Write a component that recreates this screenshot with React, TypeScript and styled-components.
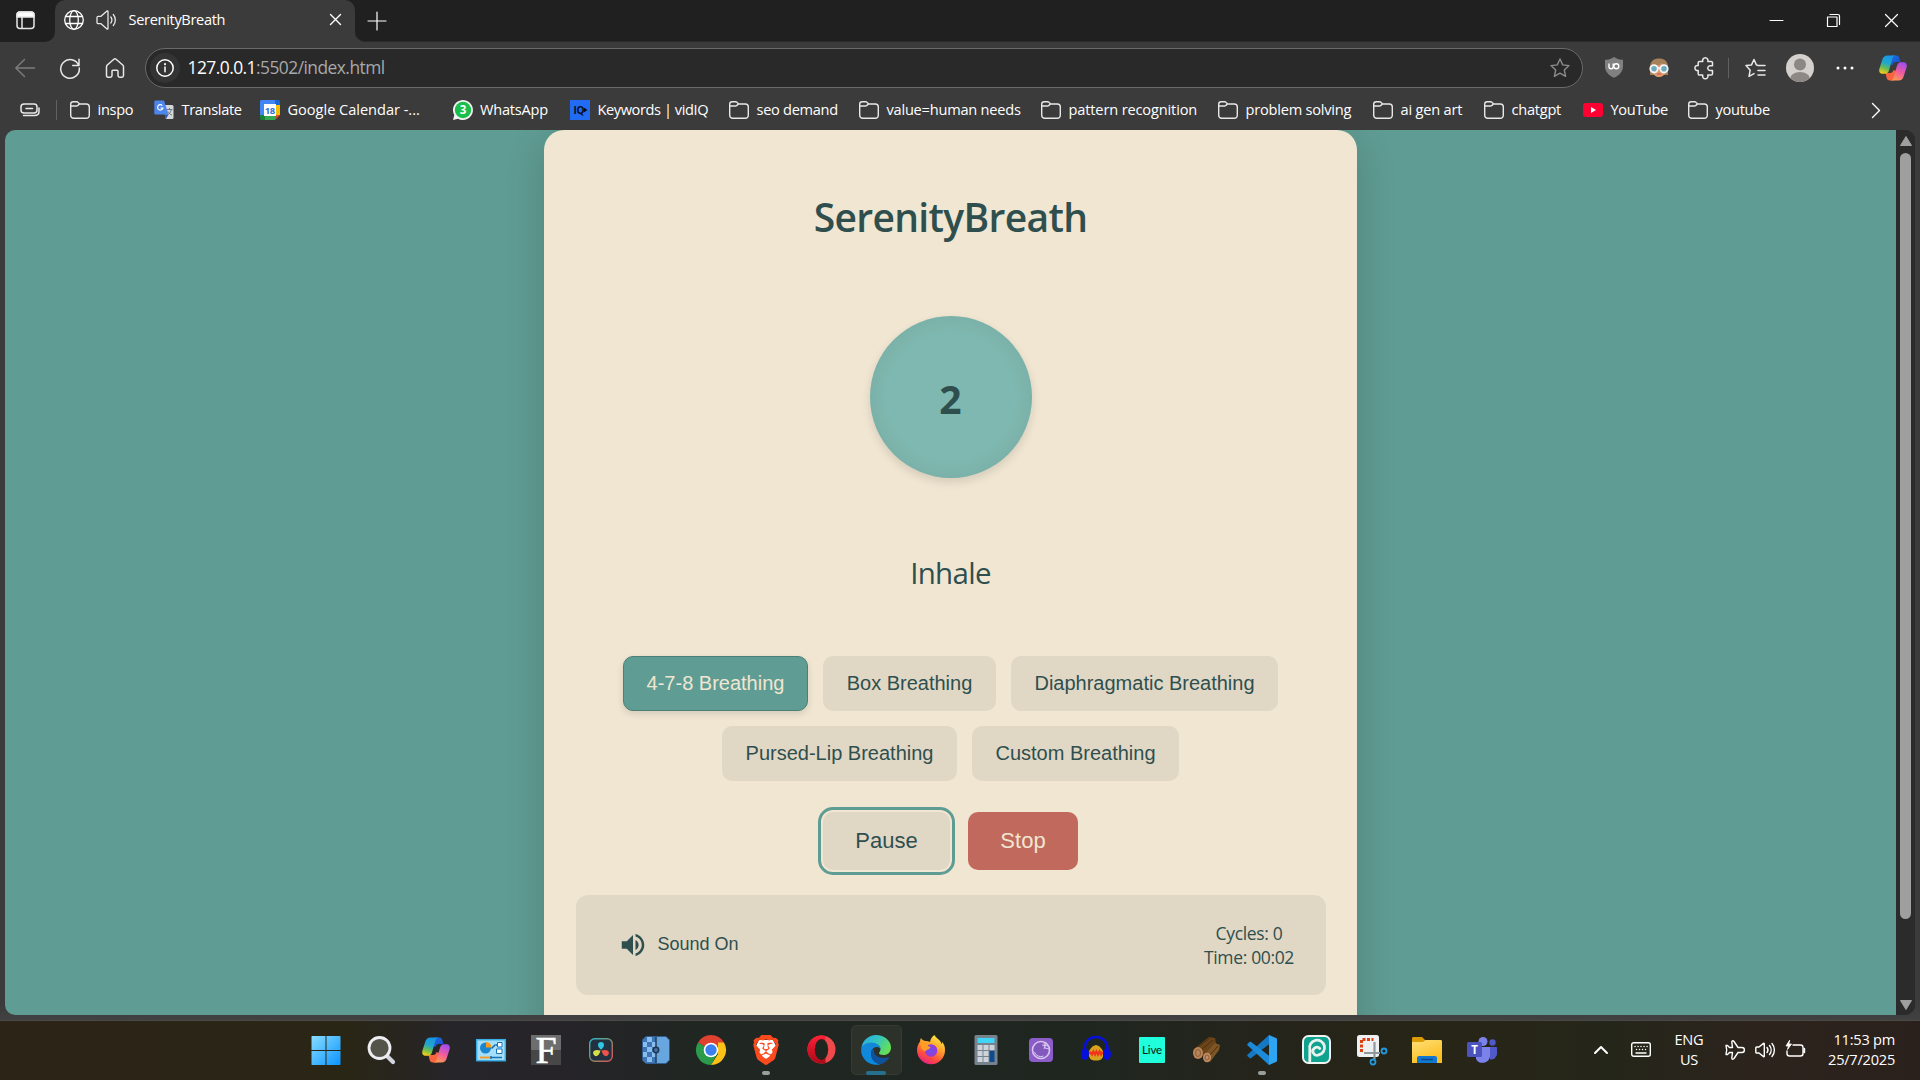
import React from "react";
import styled, { createGlobalStyle, css } from "styled-components";
import { SiBrave } from "react-icons/si";

const Global = createGlobalStyle`
  * { box-sizing: border-box; }
  html, body { margin: 0; padding: 0; background: #3b3b3b; overflow: hidden; }
  button { font-family: "Liberation Sans", Arial, sans-serif; margin: 0; cursor: pointer; }
  svg { display: block; flex: none; overflow: visible; }
`;

const ui = `"Open Sans", "Noto Sans", sans-serif`;

const Screen = styled.div`
  width: 1920px;
  height: 1080px;
  display: flex;
  flex-direction: column;
  overflow: hidden;
  font-family: ${ui};
  color: #fff;
  background: #3b3b3b;
`;

/* ---------- browser frame ---------- */

const TabStrip = styled.header`
  height: 42px;
  flex: none;
  display: flex;
  background: #202020;
`;
const Slot = styled.div<{ $w: number }>`
  width: ${(p) => p.$w}px;
  flex: none;
  display: flex;
  align-items: center;
  justify-content: center;
`;
const StripLead = styled.div`
  width: 55px;
  display: flex;
  align-items: center;
  padding-left: 16px;
  padding-bottom: 2px;
  background: #202020;
  border-bottom-right-radius: 10px;
`;
const TabBacking = styled.div`
  background: #3b3b3b;
  display: flex;
  flex: 1;
`;
const TabCorner = styled.div`
  background: linear-gradient(#202020 50%, #3b3b3b 50%);
`;
const Tab = styled.div`
  width: 300px;
  height: 42px;
  display: flex;
  align-items: center;
  padding: 0 14px 3px 9px;
  border-radius: 10px 10px 0 0;
  background: #3b3b3b;
`;
const TabTitle = styled.span`
  flex: 1;
  margin-left: 0.5px;
  padding-bottom: 1px;
  font-size: 14.6px;
  line-height: 20px;
  letter-spacing: -0.33px;
`;
const StripRest = styled.div`
  flex: 1;
  display: flex;
  align-items: center;
  background: #202020;
  border-bottom-left-radius: 10px;
  border-bottom: 1px solid #2a2a2a;
`;
const Grow = styled.div`
  flex: 1;
`;

const Toolbar = styled.div`
  height: 51px;
  flex: none;
  display: flex;
  align-items: center;
  padding: 0 5px 0 2px;
`;
const AddressBar = styled.div`
  width: 1438px;
  height: 40px;
  border-radius: 20px;
  border: 1px solid #6a6a6a;
  background: #292929;
  display: flex;
  align-items: center;
  padding: 0 12px 0 4px;
`;
const InfoBadge = styled.div`
  width: 30px;
  height: 30px;
  border-radius: 50%;
  background: #343434;
  display: flex;
  align-items: center;
  justify-content: center;
`;
const Url = styled.div`
  flex: 1;
  margin-left: 7.5px;
  padding-bottom: 1px;
  font-size: 17.4px;
  line-height: 24px;
  letter-spacing: -0.54px;
  color: #a8a8a8;
  b { font-weight: 400; color: #fff; }
`;
const Rule = styled.i`
  width: 1px;
  height: 20px;
  background: #616161;
`;

const Bookmarks = styled.nav`
  height: 37px;
  flex: none;
  display: flex;
  align-items: center;
  padding-left: 20px;
  padding-bottom: 3px;
`;
const HubSlot = styled.div`
  width: 50px;
  display: flex;
  align-items: center;
  gap: 16px;
`;
const Bookmark = styled.div<{ $w: number; $ls: number }>`
  width: ${(p) => p.$w}px;
  flex: none;
  display: flex;
  align-items: center;
  gap: 7.5px;
  white-space: nowrap;
  font-size: 14.6px;
  line-height: 20px;
  letter-spacing: ${(p) => p.$ls}px;
  span { padding-bottom: 2px; }
`;

/* ---------- page ---------- */

const Frame = styled.div`
  height: 891px;
  flex: none;
  padding: 0 5px 6px;
  background: linear-gradient(#3b3b3b 98%, #414141);
  border-bottom: 1px solid #4b4a46;
`;
const Viewport = styled.div`
  height: 885px;
  display: flex;
  border-radius: 10px;
  overflow: hidden;
  background: #2a2a2a;
`;
const PageArea = styled.main`
  width: 1891px;
  height: 885px;
  overflow: hidden;
  display: flex;
  justify-content: center;
  background: #5f9c93;
`;
const Scrollbar = styled.div`
  width: 19px;
  display: flex;
  flex-direction: column;
  align-items: center;
  padding-top: 6px;
  background: #2b2b2b;
`;
const Thumb = styled.div`
  width: 11px;
  height: 766px;
  border-radius: 6px;
  background: #9f9f9f;
  margin: 7px 0 81px;
`;
const Card = styled.section`
  width: 813px;
  height: 960px;
  flex: none;
  border-radius: 20px;
  background: #f0e6d2;
  color: #2f4f4f;
  box-shadow: 0 10px 40px rgba(0, 0, 0, 0.16);
  display: flex;
  flex-direction: column;
  align-items: center;
  padding: 60px 31.5px 0;
`;
const Title = styled.h1`
  margin: 0;
  font-size: 39px;
  line-height: 54px;
  font-weight: 600;
  letter-spacing: -0.68px;
`;
const Circle = styled.div`
  width: 162px;
  height: 162px;
  flex: none;
  margin-top: 72px;
  border-radius: 50%;
  background: #7fb8b0;
  display: flex;
  align-items: center;
  justify-content: center;
  font-size: 39px;
  font-weight: 700;
  padding-top: 2px;
  box-shadow: 0 4px 10px rgba(0, 0, 0, 0.12), inset 0 0 20px rgba(0, 0, 0, 0.08);
`;
const Phase = styled.p`
  margin: 74px 0 0;
  font-size: 29.5px;
  line-height: 42px;
  letter-spacing: -0.7px;
`;
const Techniques = styled.div`
  margin-top: 62px;
  display: flex;
  flex-wrap: wrap;
  justify-content: center;
  gap: 15px;
`;
const Technique = styled.button<{ $w: number; $active?: boolean }>`
  width: ${(p) => p.$w}px;
  height: 55px;
  padding: 0;
  border-radius: 10px;
  border: 1px solid transparent;
  background: #e0d8c5;
  color: #2f4f4f;
  font-size: 20px;
  white-space: nowrap;
  ${(p) =>
    p.$active &&
    css`
      background: #5f9c93;
      border-color: #4b8077;
      color: #f0e6d2;
      box-shadow: 0 3px 7px rgba(0, 0, 0, 0.12);
    `}
`;
const Controls = styled.div`
  margin-top: 31px;
  display: flex;
  gap: 18px;
`;
const Control = styled.button<{ $w: number; $kind: "pause" | "stop" }>`
  width: ${(p) => p.$w}px;
  height: 58px;
  padding: 0;
  border: 0;
  border-radius: 10px;
  font-size: 22px;
  ${(p) =>
    p.$kind === "stop"
      ? css`
          background: #c0695c;
          color: #f0e6d2;
        `
      : css`
          background: #e0d8c5;
          color: #2f4f4f;
          outline: 3px solid #5f9c93;
          outline-offset: 2px;
        `}
`;
const StatusPanel = styled.div`
  width: 750px;
  height: 100px;
  margin-top: 25px;
  border-radius: 12px;
  background: #e0d8c5;
  display: flex;
  align-items: center;
  justify-content: space-between;
  padding: 0 31.5px 0 42px;
`;
const SoundToggle = styled.div`
  display: flex;
  align-items: center;
  gap: 10px;
  font: 18px "Liberation Sans", Arial, sans-serif;
  span { padding-bottom: 2px; }
`;
const Stats = styled.div`
  font-size: 17.5px;
  line-height: 24px;
  text-align: center;
  letter-spacing: -0.35px;
`;

/* ---------- taskbar ---------- */

const Taskbar = styled.footer`
  height: 59px;
  flex: none;
  display: flex;
  padding-left: 298px;
  background: linear-gradient(
    90deg,
    #2c2417 0,
    #2a2616 18%,
    #26252a 24%,
    #262429 29%,
    #202622 36%,
    #1f2620 57%,
    #25241b 66%,
    #272516 74%,
    #25261a 84%,
    #2d231d 93%,
    #2b211c 100%
  );
`;
const AppSlot = styled.div<{ $active?: boolean; $mark?: "wide" | "dot" }>`
  position: relative;
  width: 55.05px;
  flex: none;
  display: flex;
  align-items: center;
  justify-content: center;
  padding: 0 0 2px 0.6px;
  ${(p) =>
    p.$active &&
    css`
      &::before {
        content: "";
        position: absolute;
        inset: 4px 2px 5px 3px;
        border-radius: 5px;
        background: #2c3229;
        border: 1px solid #353b33;
      }
    `}
  ${(p) =>
    p.$mark &&
    css`
      &::after {
        content: "";
        position: absolute;
        bottom: 5px;
        left: 50%;
        width: ${p.$mark === "wide" ? 20 : 8}px;
        height: 4px;
        margin-left: ${p.$mark === "wide" ? -9.500 : -3.500}px;
        border-radius: 2px;
        background: ${p.$mark === "wide" ? "#26708f" : "#9b9f9b"};
      }
    `}
  svg { position: relative; }
`;
const Tray = styled.div`
  flex: 1;
  display: flex;
  align-items: center;
  padding-right: 25px;
  padding-bottom: 2px;
`;
const TrayIcons = styled.div`
  display: flex;
  align-items: center;
  justify-content: flex-end;
  flex: 1;
  gap: 23px;
`;
const TrayText = styled.div`
  font-size: 14.6px;
  line-height: 20px;
  letter-spacing: -0.24px;
  white-space: nowrap;
  padding-bottom: 2px;
`;
const Language = styled(TrayText)`
  width: 60px;
  margin: 0 6px 0 8px;
  text-align: center;
`;
const QuickIcons = styled.div`
  display: flex;
  gap: 10px;
`;
const Clock = styled(TrayText)`
  width: 89px;
  text-align: right;
`;

/* ---------- icons ---------- */

type SvgProps = { w?: number; h?: number; c?: string; sw?: number; children: React.ReactNode };
const Line = ({ w = 20, h = 20, c = "#e8e8e8", sw = 1.4, children }: SvgProps) => (
  <svg width={w} height={h} viewBox={`0 0 ${w} ${h}`} fill="none" stroke={c} strokeWidth={sw} strokeLinecap="round" strokeLinejoin="round">
    {children}
  </svg>
);
const Art = ({ w = 30, h = 30, children }: SvgProps) => (
  <svg width={w} height={h} viewBox={`0 0 ${w} ${h}`}>{children}</svg>
);

const Folder = () => (
  <Line>
    <path d="M.7 4.2A2.5 2.5 0 0 1 3.2 1.7h3.3c.7 0 1.2.2 1.6.7L9.700 4h6.600a3 3 0 0 1 3 3v8.300a3 3 0 0 1-3 3H3.700a3 3 0 0 1-3-3zM.7 6h5.600c.7 0 1.200-.2 1.600-.6L9.500 4" />
  </Line>
);
const TabActions = () => (
  <Line w={20} sw={1.5}>
    <rect x="1" y="2" width="17" height="16.5" rx="3" />
    <path d="M1 5a3 3 0 0 1 3-3h11a3 3 0 0 1 3 3v2H1z" fill="#fff" />
    <path d="M6 7v11" />
  </Line>
);
const Globe = () => (
  <Line sw={1.3} c="#fff">
    <circle cx="10" cy="10" r="9.3" />
    <ellipse cx="10" cy="10" rx="4.3" ry="9.3" />
    <path d="M1.6 6.5h16.800M1.6 13.500h16.800" />
  </Line>
);
const Speaker = () => (
  <Line sw={1.3}>
    <path d="M1 7.5c0-.8.5-1.2 1.2-1.2H5L11 1c.5-.4 1-.2 1 .5v17c0 .7-.5.9-1 .5l-6-5.300H2.200c-.7 0-1.200-.5-1.200-1.200zM14.800 7a5 5 0 0 1 0 6M17.300 4.500a8.500 8.500 0 0 1 0 11" />
  </Line>
);
const Back = () => <Line c="#7d7d7d"><path d="M19.5 10H.8M9.5 1.5.8 10l8.700 8.500" /></Line>;
const Reload = () => <Line sw={1.5}><path d="M18.7 7.5A9.3 9.3 0 1 0 19.3 10M19 1.200v6.300h-6.300" /></Line>;
const Home = () => (
  <Line sw={1.5}>
    <path d="M1.5 8.8c0-.8.3-1.3.8-1.8l6.600-5.800c.7-.6 1.500-.6 2.200 0L17.700 7c.5.5.8 1 .8 1.800v8.700c0 1-.6 1.700-1.600 1.700h-2.200c-1 0-1.700-.7-1.700-1.700v-4.200c0-.6-.4-1-1-1H8c-.6 0-1 .4-1 1v4.200c0 1-.7 1.700-1.700 1.700H3.100c-1 0-1.600-.7-1.600-1.700z" />
  </Line>
);
const Info = () => (
  <Line w={18} h={18} sw={1.5} c="#fff">
    <circle cx="9" cy="9" r="8.2" />
    <path d="M9 8v4.800" />
    <path d="M9 5.100v.1" strokeWidth="2" />
  </Line>
);
const Star = () => (
  <Line c="#8b8b8b"><path d="M10 1l2.700 5.900 6.300.7-4.700 4.400 1.300 6.400L10 15.200l-5.600 3.200 1.300-6.400L1 7.600l6.300-.7z" /></Line>
);
const Shield = () => (
  <Art w={20} h={21}>
    <path d="M10 0c3 2 6 2.800 9 2.800V9c0 6-4 9.500-9 11.800C5 18.500 1 15 1 9V2.800C4 2.800 7 2 10 0z" fill="#808080" />
    <path d="M5 6.500v3.200a2 2 0 0 0 4.200 0V6.500" stroke="#fff" strokeWidth="1.400" fill="none" />
    <circle cx="12.300" cy="9.200" r="2.500" stroke="#fff" strokeWidth="1.400" fill="none" />
  </Art>
);
const Face = () => (
  <Art w={20} h={20}>
    <path d="M1 9C1 3 5 .5 10 .5S19 3 19 9v8H1z" fill="#a5825a" />
    <path d="M3.500 8C8 8 12 7 13 5c1 2 2 3 4 3.500V13c-1 4-4 6-7 6s-6-2-6.500-6z" fill="#e39a72" />
    <path d="M8 16h4" stroke="#b65c48" />
    <circle cx="5" cy="10.800" r="3.700" fill="#6fa9bd" stroke="#f4f7f8" strokeWidth="1.800" />
    <circle cx="15" cy="10.800" r="3.700" fill="#6fa9bd" stroke="#f4f7f8" strokeWidth="1.800" />
    <path d="M8.500 10h3" stroke="#f4f7f8" strokeWidth="1.500" />
  </Art>
);
const Puzzle = () => (
  <Line sw={1.5}>
    <path d="M4.500 3.500h3.300a2.700 2.700 0 1 1 5 0h3.400c.8 0 1.300.5 1.300 1.300v3h-1.800a2.400 2.400 0 1 0 0 4.700h1.800v3.300c0 .8-.5 1.300-1.300 1.300h-3.400a2.700 2.700 0 1 1-5 0H4.500c-.8 0-1.300-.5-1.300-1.300v-3.300a2.600 2.600 0 1 1 0-5V4.800c0-.8.5-1.300 1.300-1.300z" />
  </Line>
);
const Favorites = () => (
  <Line w={21} sw={1.5}>
    <path d="M13 7.500l-1.600-.6L9 1.500 6.500 6.900l-5.500.7 4.200 4.600-1.200 6.200 5-2.800M13 7.500h7M13 12.500h7M13 17h7" />
  </Line>
);
const Profile = () => (
  <Art w={28} h={28}>
    <clipPath id="avatar"><circle cx="14" cy="14" r="14" /></clipPath>
    <g clipPath="url(#avatar)">
      <path d="M0 0h28v28H0z" fill="#d3d0cd" />
      <circle cx="14" cy="10.500" r="6" fill="#8d8885" />
      <ellipse cx="14" cy="25" rx="10" ry="7" fill="#8d8885" />
    </g>
  </Art>
);
const Dots = () => (
  <Art w={18} h={4}><g fill="#fff"><circle cx="2" cy="2" r="1.500" /><circle cx="9" cy="2" r="1.500" /><circle cx="16" cy="2" r="1.500" /></g></Art>
);
const Copilot = ({ id }: { id: string }) => (
  <Art w={28} h={26}>
    <defs>
      <linearGradient id={id + "a"} x1=".6" y1="0" x2=".3" y2="1"><stop stopColor="#1595e8" /><stop offset=".45" stopColor="#24a8c8" /><stop offset=".7" stopColor="#65bd55" /><stop offset="1" stopColor="#f5cd19" /></linearGradient>
      <linearGradient id={id + "b"} x1=".7" y1="0" x2=".3" y2="1"><stop stopColor="#a04df0" /><stop offset=".5" stopColor="#ee5aa0" /><stop offset="1" stopColor="#ff9a50" /></linearGradient>
      <linearGradient id={id + "c"} x1="0" y1="0" x2="1" y2="1"><stop stopColor="#1d74e0" /><stop offset="1" stopColor="#1a49d0" /></linearGradient>
    </defs>
    <path d="M13 .5h4c2 0 3 1 3.500 3L21.500 7H17c-2 0-3 1-3.500 3L9 9z" fill={`url(#${id}c)`} />
    <path d="M15 25.500h-4c-2 0-3-1-3.500-3L6.500 18H11c2 0 3-1 3.500-3l5 2z" fill="#f9653f" />
    <path d="M8.500.5H17c-2 0-3 1-3.600 3l-3.300 11.500c-.7 2.500-2 3.800-4 3.800H4c-3 0-4.400-2-3.600-5L3.200 5C4 2 5.700.5 8.500.5z" fill={`url(#${id}a)`} />
    <path d="M19.500 25.500H11c2 0 3-1 3.600-3L17.900 11c.7-2.500 2-3.800 4-3.800H24c3 0 4.400 2 3.600 5L24.800 21c-.8 3-2.500 4.500-5.300 4.500z" fill={`url(#${id}b)`} />
  </Art>
);
const Hub = () => (
  <Line w={20} h={14} sw={1.5}>
    <rect x="1" y="1" width="16" height="9" rx="3" />
    <path d="M6 5.500h6.500M3.500 12.500h11c3 0 4.500-1.500 4.500-4V5" />
  </Line>
);
const Translate = () => (
  <Art w={20} h={20}>
    <path d="M8 5h10a1.500 1.500 0 0 1 1.500 1.500v11A1.500 1.500 0 0 1 18 19h-6z" fill="#d5d7da" />
    <path d="M1.500.5H10l4.500 14H1.500A1.200 1.200 0 0 1 .3 13.300V1.700A1.200 1.200 0 0 1 1.500.5z" fill="#4d86ea" />
    <path d="M10.500 14.500h4L12 19z" fill="#2f55b8" />
    <path d="M8.300 5.600A2.700 2.700 0 1 0 8.900 8H6.500" stroke="#fff" strokeWidth="1.200" fill="none" />
    <path d="M12.500 9.500h6M15.500 8v1.500M17.300 9.500c-.5 2.500-2 4.500-3.800 5.500M14 11.500c1 1.800 2.500 3 4 3.700" stroke="#6c7a86" fill="none" />
  </Art>
);
const Calendar = () => (
  <Art w={20} h={20}>
    <path d="M1.500 0H15v5H5v10H0V1.500A1.500 1.500 0 0 1 1.500 0z" fill="#4285f4" />
    <path d="M15 0h3.500A1.500 1.500 0 0 1 20 1.500V5h-5z" fill="#1967d2" />
    <path d="M15 5h5v10h-5z" fill="#fbbc04" />
    <path d="M5 15h10v5H5z" fill="#34a853" />
    <path d="M0 15h5v5H1.500A1.500 1.500 0 0 1 0 18.500z" fill="#188038" />
    <path d="M15 15h5l-5 5z" fill="#ea4335" />
    <path d="M4 4h12v12H4z" fill="#fff" />
    <text x="9.800" y="13.600" fontSize="9.500" fontWeight="700" textAnchor="middle" fill="#2f6fe0" fontFamily="Open Sans" letterSpacing="-.3">18</text>
  </Art>
);
const WhatsApp = () => (
  <Art w={20} h={20}>
    <path d="M0 20l1.300-5A10 10 0 1 1 5 18.700z" fill="#f4f4f4" />
    <circle cx="10" cy="10" r="8.200" fill="#18bf4a" />
    <text x="10" y="14.200" fontSize="11.500" fontWeight="700" textAnchor="middle" fill="#fff" fontFamily="Open Sans">3</text>
  </Art>
);
const VidIq = () => (
  <Art w={20} h={20}>
    <path d="M0 0h20v20H0z" fill="#216bf5" />
    <text x="3.500" y="13.700" fontSize="10" fontWeight="700" fill="#050b1e" fontFamily="Open Sans" letterSpacing="-.3">IQ</text>
    <path d="M13.800 7.500l3.700 2.500-3.700 2.500z" fill="#050b1e" />
  </Art>
);
const YouTube = () => (
  <Art w={20} h={20}><rect y="3" width="20" height="14" rx="3" fill="#ff0033" /><path d="M8 7l5 3-5 3z" fill="#fff" /></Art>
);
const VolumeUp = () => (
  <svg width="30" height="30" viewBox="0 0 24 24" fill="#2f4f4f">
    <path d="M3 9v6h4l5 5V4L7 9H3zm13.500 3c0-1.770-1.020-3.290-2.500-4.030v8.050c1.480-.73 2.500-2.250 2.500-4.020zM14 3.230v2.060c2.890.86 5 3.540 5 6.710s-2.110 5.850-5 6.710v2.060c4.010-.91 7-4.490 7-8.770s-2.990-7.860-7-8.770z" />
  </svg>
);

const apps: { icon: React.ReactNode; active?: boolean; mark?: "wide" | "dot" }[] = [
  { icon: (
    <Art>
      <defs><linearGradient id="win" x1="0" y1="0" x2="30" y2="30" gradientUnits="userSpaceOnUse"><stop stopColor="#8be0ff" /><stop offset="1" stopColor="#0a93ff" /></linearGradient></defs>
      <path d="M1 1h13.500v14H.5V1.500zM15.500 1H29l.5.500V15h-14zM.5 16h14v14H1l-.5-.5zM15.500 16h14v13.500l-.5.500H15.500z" fill="url(#win)" />
    </Art>) },
  { icon: (
    <Art>
      <path d="M20 20l7 7" stroke="#d3d5df" strokeWidth="4.200" strokeLinecap="round" />
      <circle cx="13.500" cy="13" r="10.500" fill="#55544a" stroke="#eeeef2" strokeWidth="2.800" />
    </Art>) },
  { icon: <Copilot id="tb" /> },
  { icon: (
    <Art>
      <rect x=".7" y="4.700" width="28.600" height="21" fill="#a5def8" stroke="#39aee6" strokeWidth="1.500" />
      <circle cx="9.500" cy="13" r="5.500" fill="#1a86cf" />
      <path d="M10 12.500V7a5.500 5.500 0 0 1 5.500 5.500z" fill="#f79a1c" />
      <path d="M15.500 13.500l4-4M20 10h2M20 17h2" stroke="#1565a8" strokeWidth="1.500" />
      <path d="M21.500 7.500H26v4.500h-4.500zM20.500 14H26v4.500h-5.500z" fill="#fff" stroke="#1673b8" />
      <path d="M4 22.500h11" stroke="#f79a1c" strokeWidth="1.800" /><path d="M15 22.500h11M15 21v3" stroke="#1673b8" strokeWidth="1.500" />
    </Art>) },
  { icon: (
    <Art>
      <path d="M0 0h30v15H0z" fill="#6e6e6e" /><path d="M0 15h30v15H0z" fill="#474747" />
      <text x="15" y="27.500" fontSize="38" textAnchor="middle" fill="#fff" stroke="#fff" strokeWidth=".5" fontFamily="Liberation Serif">F</text>
    </Art>) },
  { icon: (
    <Art w={24} h={24}>
      <defs><linearGradient id="dv" x1="0" y1="0" x2="1" y2="1"><stop stopColor="#2eb8d0" /><stop offset=".5" stopColor="#7d8d6b" /><stop offset="1" stopColor="#e34f55" /></linearGradient></defs>
      <rect x=".7" y=".7" width="22.600" height="22.600" rx="5" fill="#22303f" stroke="url(#dv)" strokeWidth="1.400" />
      <path d="M12 11.800C9.500 9.500 9 8 9 7a3 3 0 0 1 6 0c0 1-.5 2.500-3 4.800z" fill="#2fc5e6" />
      <path d="M11.500 12.500c-.8 3.300-1.900 4.600-2.800 5.100a3 3 0 0 1-3-5.200c.9-.5 2.500-.8 5.800.1z" fill="#d7e043" />
      <path d="M12.500 12.500c3.300-.9 4.900-.6 5.800-.1a3 3 0 0 1-3 5.200c-.9-.5-2-1.800-2.800-5.100z" fill="#f0524c" />
    </Art>) },
  { icon: (
    <Art w={28} h={28}>
      <path d="M4 .5h20l3.500 3.500v20L24 27.500H4L.5 24V4z" fill="#68a6e0" stroke="#315d91" />
      <path d="M4 1h10v26H4l-3-3V4z" fill="#3c76b5" />
      <path d="M1 6h4V1h5v5h4v5h-4v5h4v5h-4v5H5v-5H1v-5h4v-5H1z M5 6v5h5V6z M5 16v5h5v-5z" fill="#8bbcee" fillRule="evenodd" />
      <path d="M14 1v26" stroke="#203e60" strokeWidth="1.500" /><circle cx="14" cy="14" r="2.700" fill="#45719f" stroke="#1f344f" strokeWidth="1.500" />
    </Art>) },
  { icon: (
    <Art>
      <path d="M15 15L2 7.500A15 15 0 0 1 28 7.500z" fill="#e0402f" />
      <path d="M2 7.500A15 15 0 0 0 15 30l6.500-11.500L15 15z" fill="#2a9a4b" />
      <path d="M28 7.500A15 15 0 0 1 15 30l7-11V7.500z" fill="#fbc116" />
      <circle cx="15" cy="15" r="7.300" fill="#fff" /><circle cx="15" cy="15" r="5.700" fill="#3a80f0" />
    </Art>) },
  { icon: (
    <Art w={28} h={30}>
      <path d="M7 5h14l3 6-4 13-6 4-6-4L4 11z" fill="#fff" />
      <SiBrave size={30} x={-1} y={0} color="#fb4a1e" />
    </Art>), mark: "dot" },
  { icon: (
    <Art w={29} h={29}>
      <defs><linearGradient id="op" x1="0" y1="0" x2="0" y2="1"><stop stopColor="#ff2038" /><stop offset="1" stopColor="#ad0818" /></linearGradient></defs>
      <circle cx="14.500" cy="14.500" r="14" fill="#f0494c" />
      <path d="M14.500.5a14 14 0 1 0 4 27.400V1A14 14 0 0 0 14.500.5z" fill="url(#op)" />
      <ellipse cx="14.500" cy="14.500" rx="6.700" ry="10.500" fill="#1f2620" />
    </Art>) },
  { active: true, mark: "wide", icon: (
    <Art>
      <defs>
        <linearGradient id="eg" x1="0" y1="0" x2="1" y2=".5"><stop stopColor="#2aa6e0" /><stop offset=".5" stopColor="#31c3c5" /><stop offset="1" stopColor="#64df5a" /></linearGradient>
        <linearGradient id="eb" x1="0" y1="0" x2=".3" y2="1"><stop stopColor="#1787d6" /><stop offset="1" stopColor="#0a8ae0" /></linearGradient>
      </defs>
      <path d="M.3 13C1.500 5.500 7.500 0 15 0c8.500 0 15 6 15 12.500 0 5-3.500 7.500-7.500 7.500-3 0-4.500-1-4.500-2 0-.8 1.500-1.500 1.500-4 0-3-3-5.500-7-5.500C7 8.500 2 10 .3 13z" fill="url(#eg)" />
      <path d="M.1 14C1 10.500 5 7.500 10 7.500c5.500 0 9.500 3 9.500 6.500-1-1.500-2.500-2-4-2-3 0-5.500 3-5.500 7 0 5 4 9.500 9.500 10.200A15 15 0 0 1 .1 14z" fill="url(#eb)" />
      <path d="M12 13.500c-1.500 1.500-2.200 3.500-2 6 .4 5.500 5 9.800 10 9.500 3-.8 6-3 8-6.300.3-.6-.2-1-.8-.7-1.500.8-3 1-4.700 1-5 0-9.500-3-9.500-6.500 0-1 .2-2-1-3z" fill="#0f539e" />
    </Art>) },
  { icon: (
    <Art>
      <defs>
        <linearGradient id="ff" x1=".8" y1="0" x2=".3" y2="1"><stop stopColor="#fff04a" /><stop offset=".4" stopColor="#ffa22b" /><stop offset=".75" stopColor="#ff4a3f" /><stop offset="1" stopColor="#e0208a" /></linearGradient>
        <radialGradient id="fp"><stop stopColor="#6f4ff0" /><stop offset="1" stopColor="#9a3ad0" /></radialGradient>
      </defs>
      <path d="M18.500 0c1 3 6 4.500 7 9 .8-.3.500-1.500.3-2.500C28.500 9.500 29 12 29 15a14 14 0 0 1-28 .5C1 12 2 9 4 6.500c0-1 .3-2.300 1-3.500 1 1.800 2.500 2.500 4 3 2 0 3.500.3 5 1 .5-3 2-5.500 4.500-7z" fill="url(#ff)" />
      <circle cx="15" cy="15.500" r="6.300" fill="url(#fp)" />
      <path d="M4 8c3-1.500 6 0 8 1.500-1 .5-.5 2 1.500 2 1.500.2 1 1.500-.5 2.500-1.500.8-3 1-3.500 2.500-3-1-5-4-5.500-8.500z" fill="#ff9d25" />
    </Art>) },
  { icon: (
    <Art w={24} h={30}>
      <rect x=".5" width="23" height="30" rx="1.500" fill="#78828d" /><path d="M3.500 3h17v5h-17z" fill="#3ed5f7" />
      <path d="M3.500 10h5v5h-5zM9.500 10h5v5h-5zM15.500 10h5v5h-5zM3.500 16h5v5h-5zM9.500 16h5v5h-5zM3.500 22h5v5h-5zM9.500 22h5v5h-5z" fill="#cdd3da" />
      <path d="M15.500 16h5v11h-5z" fill="#0f4a8c" />
    </Art>) },
  { icon: (
    <Art w={24} h={24}>
      <rect width="24" height="24" rx="4" fill="#8c5cc9" /><circle cx="12" cy="12" r="8.500" fill="#8158bd" stroke="#d9c6f0" strokeWidth="1.600" />
      <path d="M5.500 14a6.500 6.500 0 0 0 9 4M15 5l1 5 4 1M13 7l6 1M17 4l-2 7" stroke="#d9c6f0" strokeWidth="1" fill="none" />
    </Art>) },
  { icon: (
    <Art>
      <path d="M4 17C2 8 8 2 15 2s13 6 11 15" stroke="#0610dd" strokeWidth="2.600" fill="none" />
      <path d="M8 16c2-4 5-6 7-6s5 2 7 6c.8 4 0 6-1 7.500-1 1.500-3 2-6 2s-5-.5-6-2C7.500 21 7.500 18 8 16z" fill="#d9a21e" />
      <path d="M7.500 18.500l2-1 1.500 2 1.500-3 1.500 3 1.500-3 1.500 3 1.500-3 1.500 3 1-2 1.500 1" stroke="#f03519" strokeWidth="2.200" fill="none" />
      <ellipse cx="4" cy="19" rx="4" ry="6" fill="#0610dd" /><ellipse cx="26" cy="19" rx="4" ry="6" fill="#0610dd" />
    </Art>) },
  { icon: (
    <Art w={26} h={26}>
      <rect width="26" height="26" rx="1" fill="#1fffdb" />
      <text x="13" y="17.200" fontSize="11.500" fontWeight="500" textAnchor="middle" fill="#0d1f1c" fontFamily="Lato" letterSpacing="-.1">Live</text>
    </Art>) },
  { icon: (
    <Art>
      <path d="M1 15L17 2l6 1 1 6L9 23z" fill="#6b4519" /><path d="M12 20l11-12 5 2-1 5-9 12z" fill="#7e5524" />
      <path d="M4 13L18 3M8 16L21 5M17 21l9-10" stroke="#4c2f10" />
      <ellipse cx="6" cy="18" rx="5" ry="6" fill="#b9855a" /><ellipse cx="6" cy="18" rx="2.500" ry="3.500" fill="none" stroke="#8c5b35" />
      <ellipse cx="15" cy="22.500" rx="4" ry="4.800" fill="#c08d64" /><ellipse cx="15" cy="22.500" rx="2" ry="2.600" fill="none" stroke="#8c5b35" />
    </Art>) },
  { mark: "dot", icon: (
    <Art>
      <path d="M22 0L.7 19.500c-.6.6-.6 1.300 0 1.800L2.500 23c.5.4 1.200.4 1.700 0L23 8.500z" fill="#1478c4" />
      <path d="M22 30L.7 10.500c-.6-.6-.6-1.300 0-1.800L2.500 7c.5-.4 1.200-.4 1.700 0L23 21.500z" fill="#1b8ad8" />
      <path d="M22 0l7 3c.7.3 1 .8 1 1.500v21c0 .7-.3 1.200-1 1.500l-7 3z" fill="#2ea5f2" />
    </Art>) },
  { icon: (
    <Art w={29} h={29}>
      <rect x="1" y="1" width="27" height="27" rx="5.500" fill="#0fa28e" stroke="#f2f2f2" strokeWidth="2" />
      <path d="M7.800 26V14.500a7.500 7.500 0 1 1 8.500 5.500 4 4 0 1 1 1.500-6.500" stroke="#e8f3ef" strokeWidth="2.800" fill="none" strokeLinecap="round" />
    </Art>) },
  { icon: (
    <Art>
      <rect x="0" y="0" width="22" height="22" rx="2.500" fill="#eef0f2" />
      <path d="M4.500 17V4.500h12" stroke="#d9420f" strokeWidth="3" strokeDasharray="3 1.500" fill="none" />
      <path d="M17.500 7v17M7 18h16" stroke="#8f989f" strokeWidth="2.200" />
      <circle cx="27" cy="16" r="2.500" fill="none" stroke="#2199e0" strokeWidth="1.800" /><circle cx="16" cy="27" r="2.500" fill="none" stroke="#2199e0" strokeWidth="1.800" />
    </Art>) },
  { icon: (
    <Art>
      <defs><linearGradient id="fo" x1="0" y1="0" x2=".5" y2="1"><stop stopColor="#ffe07a" /><stop offset="1" stopColor="#fbbd1c" /></linearGradient></defs>
      <path d="M0 3.500C0 2.500.5 2 1.500 2H10l3 3v3H0z" fill="#dd9b06" />
      <path d="M0 7h11l2.500-2h15c1 0 1.500.5 1.500 1.500V28H0z" fill="url(#fo)" />
      <path d="M5 28v-5a2 2 0 0 1 2-2h16a2 2 0 0 1 2 2v5z" fill="#1277cf" /><path d="M9 24.500h12" stroke="#07498f" strokeWidth="1.500" />
    </Art>) },
  { icon: (
    <Art>
      <circle cx="25.500" cy="7.500" r="3.200" fill="#5059c9" /><path d="M20 12h9c.6 0 1 .4 1 1v6a6 6 0 0 1-7 5.500z" fill="#5059c9" />
      <circle cx="16" cy="6.500" r="4.500" fill="#7b83eb" /><path d="M9 12h14v9a7.500 7.500 0 0 1-14 3z" fill="#7b83eb" />
      <rect x="0" y="7" width="15" height="15" rx="1.500" fill="#4b53bc" />
      <text x="7.500" y="18.500" fontSize="11.500" fontWeight="700" textAnchor="middle" fill="#fff" fontFamily="Open Sans">T</text>
    </Art>) },
];

const bookmarks: { label: string; width: number; spacing: number; icon: React.ReactNode }[] = [
  { label: "inspo", width: 84, spacing: -0.3, icon: <Folder /> },
  { label: "Translate", width: 106, spacing: -0.33, icon: <Translate /> },
  { label: "Google Calendar -...", width: 192.5, spacing: -0.03, icon: <Calendar /> },
  { label: "WhatsApp", width: 117.5, spacing: -0.22, icon: <WhatsApp /> },
  { label: "Keywords | vidIQ", width: 159, spacing: -0.42, icon: <VidIq /> },
  { label: "seo demand", width: 130, spacing: -0.3, icon: <Folder /> },
  { label: "value=human needs", width: 182, spacing: -0.23, icon: <Folder /> },
  { label: "pattern recognition", width: 177, spacing: -0.15, icon: <Folder /> },
  { label: "problem solving", width: 155, spacing: -0.22, icon: <Folder /> },
  { label: "ai gen art", width: 111, spacing: -0.2, icon: <Folder /> },
  { label: "chatgpt", width: 99, spacing: -0.25, icon: <Folder /> },
  { label: "YouTube", width: 105, spacing: -0.4, icon: <YouTube /> },
  { label: "youtube", width: 100, spacing: -0.28, icon: <Folder /> },
];

export default function App() {
  return (
    <Screen>
      <Global />
      <TabStrip>
        <TabBacking>
          <StripLead><TabActions /></StripLead>
          <TabCorner>
            <Tab>
              <Globe />
              <Slot $w={44}><Speaker /></Slot>
              <TabTitle>SerenityBreath</TabTitle>
              <Line w={11} h={11} c="#fff"><path d="M.5.5l10 10M10.500.5l-10 10" /></Line>
            </Tab>
          </TabCorner>
          <StripRest>
            <Slot $w={44}><Line w={18} h={18} c="#fff" sw={1.2}><path d="M9 0v18M0 9h18" /></Line></Slot>
            <Grow />
            <Slot $w={58}><Line w={13} h={13} c="#fff" sw={1}><path d="M0 6.500h13" /></Line></Slot>
            <Slot $w={57}><Line w={13} h={13} c="#fff" sw={1.2}><path d="M.5 3h9.500v9.500H.5zM3 .5h8a1.500 1.500 0 0 1 1.500 1.500v8.500" /></Line></Slot>
            <Slot $w={58}><Line w={13} h={13} c="#fff" sw={1.2}><path d="M.5.5l12 12M12.500.5l-12 12" /></Line></Slot>
          </StripRest>
        </TabBacking>
      </TabStrip>
      <Toolbar>
        <Slot $w={46}><Back /></Slot>
        <Slot $w={44}><Reload /></Slot>
        <Slot $w={46}><Home /></Slot>
        <Slot $w={7} />
        <AddressBar>
          <InfoBadge><Info /></InfoBadge>
          <Url><b>127.0.0.1</b>:5502/index.html</Url>
          <Star />
        </AddressBar>
        <Slot $w={8} />
        <Slot $w={45}><Shield /></Slot>
        <Slot $w={45}><Face /></Slot>
        <Slot $w={47}><Puzzle /></Slot>
        <Rule />
        <Slot $w={52}><Favorites /></Slot>
        <Slot $w={38}><Profile /></Slot>
        <Slot $w={52}><Dots /></Slot>
        <Slot $w={44}><Copilot id="cp" /></Slot>
      </Toolbar>
      <Bookmarks>
        <HubSlot><Hub /><Rule /></HubSlot>
        {bookmarks.map((b) => (
          <Bookmark key={b.label} $w={b.width} $ls={b.spacing}>{b.icon}<span>{b.label}</span></Bookmark>
        ))}
        <Grow />
        <Slot $w={88}><Line w={8} h={15} c="#fff"><path d="M.5.5l7 7-7 7" /></Line></Slot>
      </Bookmarks>

      <Frame>
        <Viewport>
          <PageArea>
            <Card>
              <Title>SerenityBreath</Title>
              <Circle>2</Circle>
              <Phase>Inhale</Phase>
              <Techniques>
                <Technique $w={185} $active>4-7-8 Breathing</Technique>
                <Technique $w={173}>Box Breathing</Technique>
                <Technique $w={267}>Diaphragmatic Breathing</Technique>
                <Technique $w={235}>Pursed-Lip Breathing</Technique>
                <Technique $w={207}>Custom Breathing</Technique>
              </Techniques>
              <Controls>
                <Control $w={127} $kind="pause">Pause</Control>
                <Control $w={110} $kind="stop">Stop</Control>
              </Controls>
              <StatusPanel>
                <SoundToggle><VolumeUp /><span>Sound On</span></SoundToggle>
                <Stats>
                  <div>Cycles: 0</div>
                  <div>Time: 00:02</div>
                </Stats>
              </StatusPanel>
            </Card>
          </PageArea>
          <Scrollbar>
            <Art w={12} h={10}><path d="M6 .5l5.500 9H.5z" fill="#9f9f9f" stroke="#9f9f9f" strokeLinejoin="round" /></Art>
            <Thumb />
            <Art w={12} h={10}><path d="M6 9.500l5.500-9H.5z" fill="#9f9f9f" stroke="#9f9f9f" strokeLinejoin="round" /></Art>
          </Scrollbar>
        </Viewport>
      </Frame>

      <Taskbar>
        {apps.map((a, i) => (
          <AppSlot key={i} $active={a.active} $mark={a.mark}>{a.icon}</AppSlot>
        ))}
        <Tray>
          <TrayIcons>
            <Line w={14} h={8} c="#fff" sw={2}><path d="M1 7l6-6 6 6" /></Line>
            <Line w={20} h={15} c="#fff" sw={1.4}>
              <rect x=".7" y=".7" width="18.600" height="13.600" rx="2" />
              <path d="M4 4.500h.1M7 4.500h.1M10 4.500h.1M13 4.500h.1M16 4.500h.1M5.500 7.500h.1M8.500 7.500h.1M11.500 7.500h.1M14.500 7.500h.1M5 11h10" />
            </Line>
          </TrayIcons>
          <Language>ENG<br />US</Language>
          <QuickIcons>
            <Line w={20} h={20} c="#fff" sw={1.4}>
              <path d="M7.500 7.500L6.800 2c0-.7.4-1.200 1-1.200.5 0 .9.3 1.200.7l4 6H17c1.500 0 2.400 1.200 2.400 2.500s-.9 2.500-2.400 2.500h-4l-4 6c-.3.5-.7.7-1.200.7-.6 0-1-.5-1-1.200l.7-5.500H4.500L2.500 14.500H1L1.700 10 1 5.500h1.500l2 2z" />
            </Line>
            <Line w={20} h={20} c="#fff" sw={1.4}>
              <path d="M.8 8c0-.6.3-1 1-1H4l4.500-3.600c.4-.3.8-.1.8.4v12.400c0 .5-.4.7-.8.4L4 13H1.800c-.7 0-1-.4-1-1zM12 7.500a4 4 0 0 1 0 5M14.500 5.500a7 7 0 0 1 0 9M17 3.500a10 10 0 0 1 0 13" />
            </Line>
            <Line w={21} h={20} c="#fff" sw={1.4}>
              <path d="M8 5h7.500A2.500 2.500 0 0 1 18 7.500v6a2.500 2.500 0 0 1-2.500 2.500h-11A2.500 2.500 0 0 1 2 13.500V11M19.500 8.500v4" />
              <path d="M4.500.5L1 6h2.500L2.500 9.500 6.500 4H4z" fill="#fff" strokeWidth=".8" />
            </Line>
          </QuickIcons>
          <Clock>11:53 pm<br />25/7/2025</Clock>
        </Tray>
      </Taskbar>
    </Screen>
  );
}
